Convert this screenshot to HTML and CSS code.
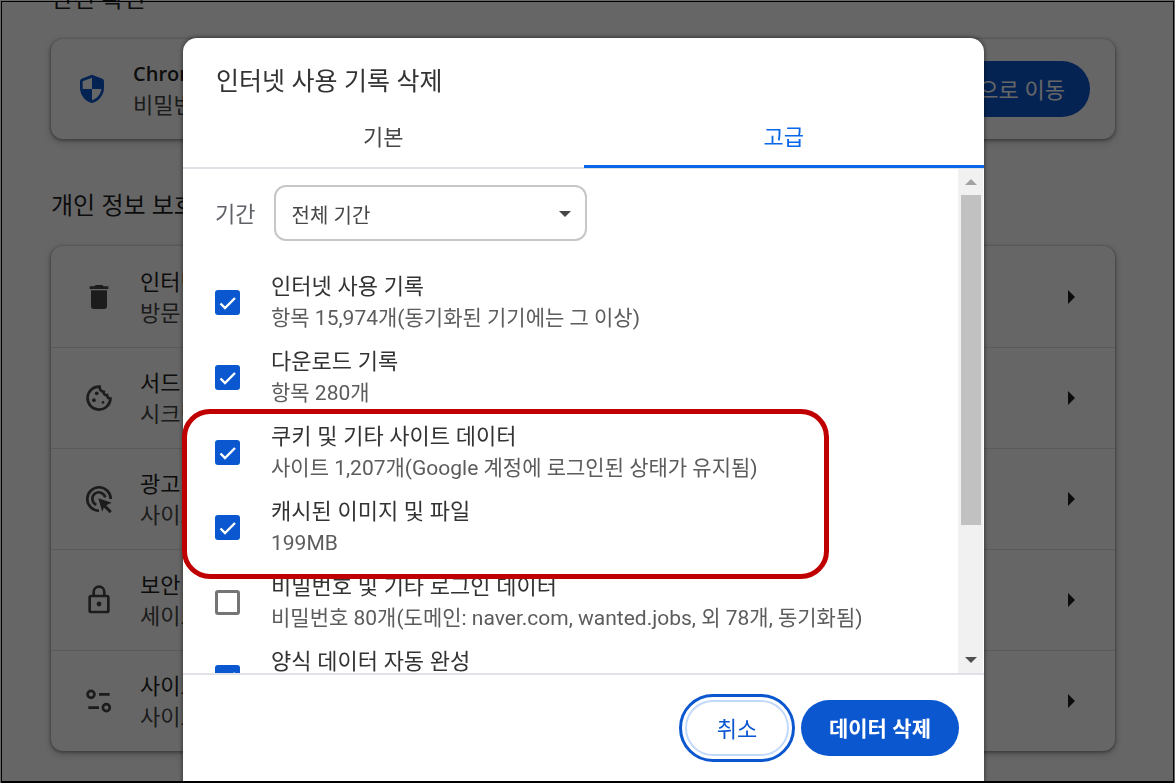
FILE: index.html
```html
<!DOCTYPE html>
<html lang="ko">
<head>
  <meta charset="UTF-8">
  <meta name="viewport" content="width=device-width, initial-scale=1">
  <title>설정 - 인터넷 사용 기록 삭제</title>
  <link rel="stylesheet" href="styles.css">
</head>
<body>
  <!-- 설정 페이지 -->
  <main class="settings">
    <h2 class="section-title">안전 확인</h2>
    <section class="card safety">
      <svg class="icon shield" viewBox="0 0 24 24"><path fill-rule="evenodd" d="M12 1.4 4.2 4.3Q3 4.8 3 6.1V11c0 5.5 3.8 10.2 9 11.5 5.2-1.3 9-6 9-11.5V6.1Q21 4.8 19.8 4.3zM12 12h7c-.5 4-3.3 7.3-7 8.4V12H5V6.2l7-2.7z"/></svg>
      <div class="item-text">
        <strong>Chrome 안전 확인</strong>
        <span>비밀번호, 확장 프로그램 등</span>
      </div>
      <button class="btn btn-primary" type="button">안전 확인으로 이동</button>
    </section>

    <h2 class="section-title">개인 정보 보호 및 보안</h2>
    <section class="card">
      <a class="setting" href="#history">
        <svg class="icon" viewBox="0 0 24 24"><path d="M6 19c0 1.1.9 2 2 2h8c1.1 0 2-.9 2-2V7H6zM19 4h-3.5l-1-1h-5l-1 1H5v2h14z"/></svg>
        <span class="item-text"><b>인터넷 사용 기록 삭제</b><span>방문 기록, 쿠키, 캐시 등 삭제</span></span>
        <span class="arrow"></span>
      </a>
      <a class="setting" href="#cookies">
        <svg class="icon line" viewBox="0 0 24 24"><path d="M12.5 3.5A8.6 8.6 0 1 0 20.6 12.5C19.3 12.5 18 11.5 18 9.8 16.5 10 15.2 8.7 15.5 7.3 13.5 7.2 12.3 5.5 12.5 3.5z"/><g class="solid"><circle cx="10.3" cy="8.5" r="1.4"/><circle cx="8.2" cy="13.6" r="1.4"/><circle cx="15" cy="15.3" r="1"/></g></svg>
        <span class="item-text"><b>서드 파티 쿠키</b><span>시크릿 모드에서 쿠키가 차단됨</span></span>
        <span class="arrow"></span>
      </a>
      <a class="setting" href="#ads">
        <svg class="icon line" viewBox="0 0 24 24"><path d="M12 20.8A8.8 8.8 0 1 1 20.8 12"/><path d="M10 16.4A4.9 4.9 0 1 1 16.7 10.8"/><path class="solid" d="m11.5 11.5 10 3.3-4.1 1.9 4.2 4.3-1.6 1.6-4.3-4.3-1.3 3.2z"/></svg>
        <span class="item-text"><b>광고 개인 정보 보호</b><span>사이트 광고 정보 맞춤설정</span></span>
        <span class="arrow"></span>
      </a>
      <a class="setting" href="#security">
        <svg class="icon line" viewBox="0 0 24 24"><rect x="5" y="9" width="14" height="12" rx="1"/><path d="M8 9V6a4 4 0 0 1 8 0v3"/><circle class="solid" cx="12" cy="15" r="1.8"/></svg>
        <span class="item-text"><b>보안</b><span>세이프 브라우징 및 보안 설정</span></span>
        <span class="arrow"></span>
      </a>
      <a class="setting" href="#sites">
        <svg class="icon line" viewBox="0 0 24 24"><circle cx="6" cy="7" r="2.6"/><path d="M12 7h8M4 17h8"/><circle cx="17.5" cy="17" r="2.6"/></svg>
        <span class="item-text"><b>사이트 설정</b><span>사이트에서 사용하는 정보 관리</span></span>
        <span class="arrow"></span>
      </a>
    </section>
  </main>

  <!-- 삭제 대화상자 -->
  <div class="backdrop">
    <div class="dialog" role="dialog" aria-labelledby="dialog-title">
      <h1 id="dialog-title">인터넷 사용 기록 삭제</h1>
      <div class="tabs" role="tablist">
        <button class="tab" type="button" role="tab">기본</button>
        <button class="tab active" type="button" role="tab" aria-selected="true">고급</button>
      </div>

      <div class="dialog-body">
        <div class="scroll-content">
          <div class="period">
            <label for="period">기간</label>
            <div class="select-wrap">
              <select id="period">
                <option>전체 기간</option>
              </select>
            </div>
          </div>
          <div class="options">
            <label class="option">
              <input type="checkbox" checked>
              <span class="option-text"><b>인터넷 사용 기록</b><span>항목 15,974개(동기화된 기기에는 그 이상)</span></span>
            </label>
            <label class="option">
              <input type="checkbox" checked>
              <span class="option-text"><b>다운로드 기록</b><span>항목 280개</span></span>
            </label>
            <label class="option">
              <input type="checkbox" checked>
              <span class="option-text"><b>쿠키 및 기타 사이트 데이터</b><span>사이트 1,207개(Google 계정에 로그인된 상태가 유지됨)</span></span>
            </label>
            <label class="option">
              <input type="checkbox" checked>
              <span class="option-text"><b>캐시된 이미지 및 파일</b><span>199MB</span></span>
            </label>
            <label class="option">
              <input type="checkbox">
              <span class="option-text"><b>비밀번호 및 기타 로그인 데이터</b><span>비밀번호 80개(도메인: naver.com, wanted.jobs, 외 78개, 동기화됨)</span></span>
            </label>
            <label class="option">
              <input type="checkbox" checked>
              <span class="option-text"><b>양식 데이터 자동 완성</b></span>
            </label>
          </div>
        </div>
        <div class="scrollbar">
          <span class="scroll-up"></span>
          <div class="track"><div class="thumb"></div></div>
          <span class="scroll-down"></span>
        </div>
      </div>

      <div class="dialog-footer">
        <button class="btn btn-cancel" type="button">취소</button>
        <button class="btn btn-primary btn-delete" type="button">데이터 삭제</button>
      </div>

      <!-- 강조 표시 -->
      <div class="highlight"></div>
    </div>
  </div>
  <div class="frame"></div>
</body>
</html>
```
FILE: styles.css
```css
* {
  box-sizing: border-box;
  margin: 0;
  padding: 0;
}

body {
  height: 100vh;
  overflow: hidden;
  background-color: #fff;
  color: #1f1f1f;
  font-family: "Open Sans", "Noto Sans CJK KR", sans-serif;
  font-size: 22px;
  line-height: 31px;
}

button,
select {
  font-family: inherit;
  font-size: 22px;
}

b {
  font-weight: 400;
}

/* 설정 페이지 */
.settings {
  margin: -22px 60px 0 51px;
}

.section-title {
  font-size: 24px;
  font-weight: 400;
  line-height: 40px;
}

.card {
  margin: 21px 0 46px;
  border-radius: 12px;
  box-shadow: 0 1px 3px 1px rgba(0, 0, 0, 0.3), 0 3px 8px 1px rgba(0, 0, 0, 0.15);
}

.safety {
  display: flex;
  align-items: center;
  gap: 25px;
  height: 100px;
  padding: 0 25px;
}

.safety .btn {
  margin-left: auto;
}

.setting {
  display: flex;
  align-items: center;
  gap: 25px;
  height: 101px;
  padding: 0 40px 0 32px;
  color: inherit;
  text-decoration: none;
}

.setting + .setting {
  border-top: 1px solid #e0e0e0;
}

.item-text {
  display: flex;
  flex-direction: column;
}

.item-text > span {
  color: #474747;
}

.item-text strong {
  font-size: 20px;
  font-weight: 600;
}

.icon {
  flex: none;
  width: 32px;
  height: 32px;
  fill: #474747;
}

.icon.shield {
  fill: #0b57d0;
}

.icon.line {
  fill: none;
  stroke: #474747;
  stroke-width: 2;
}

.icon .solid {
  fill: #474747;
  stroke: none;
}

.arrow {
  margin-left: auto;
  border: 7px solid transparent;
  border-left-color: #1f1f1f;
  border-right: 0;
}

/* 버튼 */
.btn {
  height: 56px;
  padding: 0 25px 3px;
  border: none;
  border-radius: 28px;
  cursor: pointer;
}

.btn-primary {
  background-color: #0b57d0;
  color: #fff;
}

.btn-cancel {
  width: 104px;
  border: 2px solid #c2d9fc;
  background-color: #fff;
  color: #0b57d0;
  outline: 3px solid #0b57d0;
  outline-offset: 3px;
}

.btn-delete {
  padding: 0 28px 3px;
  font-size: 21px;
  font-weight: 700;
}

/* 대화상자 */
.backdrop {
  position: fixed;
  inset: 0;
  display: flex;
  justify-content: center;
  padding: 38px 8px 0 0;
  background-color: rgba(0, 0, 0, 0.6);
}

.dialog {
  position: relative;
  display: flex;
  flex-direction: column;
  width: 100%;
  max-width: 801px;
  background-color: #fff;
  border-radius: 14px 14px 0 0;
  box-shadow: 0 0 5px rgba(0, 0, 0, 0.6);
}

.dialog h1 {
  padding: 26px 33px 12px;
  font-size: 25px;
  font-weight: 400;
  line-height: 32px;
  color: #333;
}

.tabs {
  display: flex;
  height: 61px;
  border-bottom: 2px solid #e0e2e8;
}

.tab {
  flex: 1;
  height: 60px;
  padding-bottom: 4px;
  border: none;
  border-bottom: 3px solid transparent;
  background: none;
  color: #474747;
  cursor: pointer;
}

.tab.active {
  border-bottom-color: #0b67ea;
  color: #0b67ea;
}

.dialog-body {
  display: flex;
  flex: 1;
  min-height: 0;
  padding-right: 1px;
}

.scroll-content {
  flex: 1;
  overflow: hidden;
  padding: 16px 32px 0;
}

.period {
  display: flex;
  align-items: center;
  gap: 19px;
  color: #5f6368;
}

.select-wrap {
  position: relative;
  width: 313px;
}

.select-wrap::after {
  content: "";
  position: absolute;
  top: 26px;
  right: 16px;
  border: 6px solid transparent;
  border-top-color: #474747;
  border-bottom: 0;
  pointer-events: none;
}

.period select {
  appearance: none;
  width: 100%;
  height: 56px;
  padding: 4px 15px 0;
  border: 2px solid #c7c7c7;
  border-radius: 12px;
  background-color: #fff;
  color: #474747;
  font-size: 20px;
}

.options {
  display: flex;
  flex-direction: column;
  gap: 11px;
  padding-top: 29px;
}

.option {
  display: flex;
  align-items: center;
  gap: 31px;
  min-height: 64px;
}

.option input {
  appearance: none;
  flex: none;
  width: 25px;
  height: 25px;
  border: 3px solid #757575;
  border-radius: 3px;
  background-color: #fff;
}

.option input:checked {
  border: none;
  background: #0b57d0 url('data:image/svg+xml,<svg xmlns="http://www.w3.org/2000/svg" viewBox="0 0 25 25"><path d="M5.5 13.5l4.5 4.5L20 8" fill="none" stroke="white" stroke-width="2.4"/></svg>');
}

.option-text {
  display: flex;
  flex-direction: column;
  align-self: flex-start;
  white-space: nowrap;
}

.option-text b {
  color: #333;
}

.option-text span {
  padding-top: 1px;
  color: #5c5c5c;
  font-family: Roboto, "Noto Sans CJK KR", sans-serif;
  font-size: 21px;
  line-height: 32px;
}

/* 스크롤바 */
.scrollbar {
  display: flex;
  flex-direction: column;
  align-items: center;
  width: 25px;
  background-color: #f1f1f1;
}

.track {
  flex: 1;
  width: 20px;
}

.thumb {
  height: 73%;
  background-color: #c1c1c1;
}

.scroll-up,
.scroll-down {
  margin: 10px 0;
  border: 6px solid transparent;
}

.scroll-up {
  border-top: 0;
  border-bottom-color: #a3a3a3;
}

.scroll-down {
  border-bottom: 0;
  border-top-color: #505050;
}

.dialog-footer {
  display: flex;
  align-items: flex-start;
  justify-content: flex-end;
  gap: 12px;
  height: 110px;
  padding: 25px 25px 0;
  border-top: 2px solid #e0e2e8;
}

.highlight {
  position: absolute;
  top: 371px;
  left: -1px;
  width: 647px;
  height: 170px;
  border: 5px solid #c00000;
  border-radius: 28px;
  pointer-events: none;
}

.frame {
  position: fixed;
  inset: 1px 1px 0 1px;
  border: 1px solid #000;
  border-bottom-width: 2px;
  pointer-events: none;
}
```
